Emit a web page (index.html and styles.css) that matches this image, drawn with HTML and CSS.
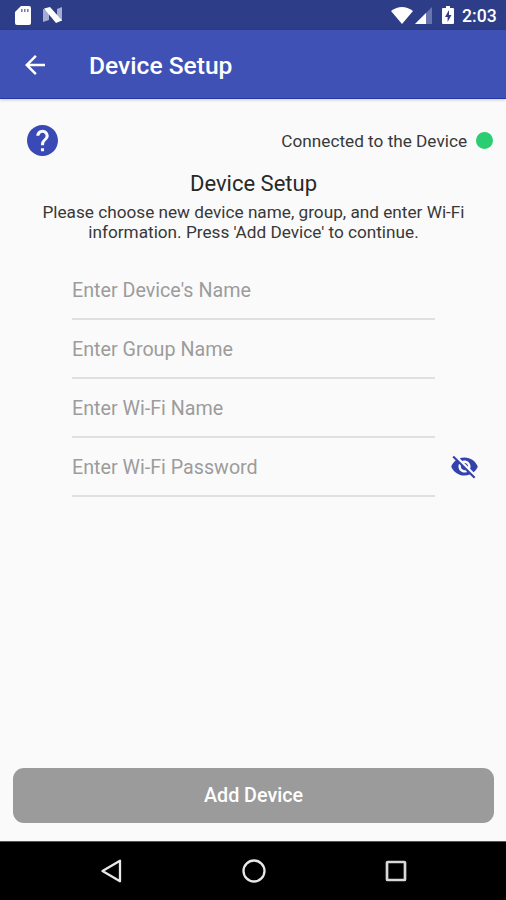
FILE: index.html
```html
<!DOCTYPE html>
<html lang="en">
<head>
<meta charset="utf-8">
<title>Device Setup</title>
<link rel="stylesheet" href="styles.css">
</head>
<body>
<div class="status-bar">
  <svg class="sd" viewBox="0 0 16 19" width="16" height="19"><path fill="#fff" d="M6 0h8q2 0 2 2v15q0 2-2 2H2q-2 0-2-2V6z"/><path stroke="#6d77b3" stroke-width="1.5" d="M6.8 3v3M9.8 3v3M12.8 3v3"/></svg>
  <svg class="nougat" viewBox="0 0 20 16" width="20" height="16"><path fill="#a5add3" d="M0 2l6 2v9l-6 2zM14 2l5-2v14l-5-2z"/><path fill="#fff" d="M1 1.5L7 0l12 13.5L13 16z"/></svg>
  <div class="status-right">
    <svg class="wifi" viewBox="0 0 22 17" width="22" height="17"><path fill="#fff" d="M0 4Q11-4 22 4L11 17z"/></svg>
    <svg class="signal" viewBox="0 0 17 17" width="17" height="17"><path fill="#6974b1" d="M17 0v17H0z"/><path fill="#fff" d="M11 6v11H0z"/></svg>
    <svg class="battery" viewBox="0 0 12 18" width="12" height="18"><path fill="#fff" d="M4 0h4v2h3q1 0 1 1v14q0 1-1 1H1q-1 0-1-1V3q0-1 1-1h3z"/><path fill="#303f8c" d="M7 4L3 11h2.6v5L9.5 9H7z"/></svg>
    <span class="clock">2:03</span>
  </div>
</div>
<header class="app-bar">
  <svg class="back" viewBox="4 4 16 16" width="20" height="20"><path fill="#fff" d="M20 11H7.83l5.59-5.59L12 4l-8 8 8 8 1.41-1.41L7.83 13H20v-2z"/></svg>
  <h1>Device Setup</h1>
</header>
<main>
  <div class="connection">
    <svg class="help" viewBox="2 2 20 20" width="31" height="31"><path fill="#3949b5" d="M12 2C6.48 2 2 6.48 2 12s4.48 10 10 10 10-4.48 10-10S17.52 2 12 2zm1 17h-2v-2h2v2zm2.07-7.75l-.9.92C13.45 12.9 13 13.5 13 15h-2v-.5c0-1.1.45-2.1 1.17-2.83l1.24-1.26c.37-.36.59-.86.59-1.41 0-1.1-.9-2-2-2s-2 .9-2 2H8c0-2.21 1.79-4 4-4s4 1.79 4 4c0 .88-.36 1.68-.93 2.25z"/></svg>
    <span class="connected">Connected to the Device</span>
    <span class="dot"></span>
  </div>
  <h2>Device Setup</h2>
  <p>Please choose new device name, group, and enter Wi-Fi<br>information. Press 'Add Device' to continue.</p>
  <form>
    <div class="field"><span>Enter Device's Name</span></div>
    <div class="field"><span>Enter Group Name</span></div>
    <div class="field"><span>Enter Wi-Fi Name</span></div>
    <div class="field"><span>Enter Wi-Fi Password</span>
      <svg class="eye" viewBox="0 0 24 24" width="29" height="29"><path fill="#3442ab" d="M12 7c2.76 0 5 2.24 5 5 0 .65-.13 1.26-.36 1.83l2.92 2.92c1.51-1.26 2.7-2.89 3.43-4.75-1.73-4.39-6-7.5-11-7.5-1.4 0-2.74.25-3.98.7l2.16 2.16C10.74 7.13 11.35 7 12 7zM2 4.27l2.28 2.28.46.46C3.08 8.3 1.78 10.02 1 12c1.73 4.39 6 7.5 11 7.5 1.55 0 3.03-.3 4.38-.84l.42.42L19.73 22 21 20.73 3.27 3 2 4.27zM7.53 9.8l1.55 1.55c-.05.21-.08.43-.08.65 0 1.66 1.34 3 3 3 .22 0 .44-.03.65-.08l1.55 1.55c-.67.33-1.41.53-2.2.53-2.76 0-5-2.24-5-5 0-.79.2-1.53.53-2.2zm4.31-.78l3.15 3.15.02-.16c0-1.66-1.34-3-3-3l-.17.01z"/></svg>
    </div>
  </form>
  <button type="button">Add Device</button>
</main>
<nav>
  <svg viewBox="0 0 26 26" width="26" height="26"><path fill="none" stroke="#e8e8e8" stroke-width="2.3" stroke-linejoin="round" d="M22 2.7v20.6L4.5 13z"/></svg>
  <svg viewBox="0 0 26 26" width="26" height="26"><circle cx="13" cy="13" r="10.5" fill="none" stroke="#e8e8e8" stroke-width="2.3"/></svg>
  <svg viewBox="0 0 26 26" width="26" height="26"><rect x="4" y="4" width="18" height="18" rx=".6" fill="none" stroke="#d8d8d8" stroke-width="2.7"/></svg>
</nav>
</body>
</html>
```
FILE: styles.css
```css
* { box-sizing: border-box; }
body {
  margin: 0;
  width: 506px;
  height: 900px;
  display: flex;
  flex-direction: column;
  overflow: hidden;
  background: #fafafa;
  font-family: Roboto, sans-serif;
  color: #383838;
}
svg { display: block; flex: none; }
span { white-space: nowrap; }
.status-bar {
  height: 30px;
  padding: 0 9px 0 15px;
  display: flex;
  align-items: center;
  background: #2e3d88;
  color: #fff;
}
.nougat { margin-left: 12px; }
.status-right { margin-left: auto; display: flex; align-items: center; }
.signal { margin-left: 2px; }
.battery { margin-left: 10px; }
.clock { width: 35px; margin-left: 8px; font-size: 17.6px; font-weight: 500; line-height: 30px; padding-top: 2px; }
.app-bar {
  height: 69px;
  display: flex;
  align-items: center;
  padding-left: 25px;
  background: #3f51b5;
  border-bottom: 1px solid #2439a5;
  box-shadow: 0 1px 3px #0003;
  color: #fff;
}
.back { margin-top: 1px; }
h1 { margin: 4px 0 0 44px; font-size: 24.6px; font-weight: 500; line-height: 30px; }
main { height: 742px; flex: none; display: flex; flex-direction: column; padding: 26px 12px 18px 13px; }
.connection { height: 31px; display: flex; align-items: center; padding-left: 14px; }
.connected { margin-left: auto; font-size: 17.2px; }
.dot { width: 17px; height: 17px; margin: 0 1px 0 9px; border-radius: 50%; background: #2acd70; }
h2 { margin: 13px 0 0; text-align: center; font-size: 22px; font-weight: 400; line-height: 30px; color: #282828; }
p { margin: 4px 0 0; text-align: center; font-size: 17.2px; line-height: 19.5px; }
form { margin: 19px 0 0 59px; width: 363px; }
.field { height: 59px; border-bottom: 2px solid #e0e0e0; display: flex; align-items: center; font-size: 19.7px; color: #9c9c9c; }
.field span { padding-top: 1px; }
.eye { margin-left: 192px; }
button { height: 55px; flex: none; margin-top: auto; border: 0; border-radius: 11px; background: #9b9b9b; color: #fff; font: 500 19.7px Roboto, sans-serif; }
nav { height: 59px; flex: none; display: flex; align-items: center; justify-content: space-between; padding: 0 97px 0 98px; background: #000; border-top: 1px solid #555; }
```
